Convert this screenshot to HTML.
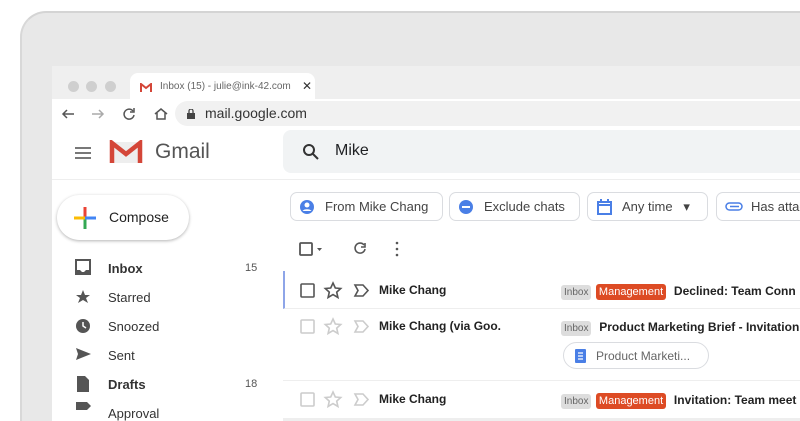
<!DOCTYPE html>
<html style="overflow:hidden;width:800px;height:421px"><head><style>
*{margin:0;padding:0;box-sizing:border-box}
body{width:800px;height:421px;overflow:hidden;background:#fff;font-family:"Liberation Sans",Arial,sans-serif;position:relative;color:#202124}
.abs{position:absolute}
.bezel{left:20px;top:11px;width:780px;height:410px;background:#e8e8e8;border-top:2px solid #d4d4d4;border-left:2px solid #d8d8d8;border-top-left-radius:26px}
.screen{left:52px;top:66px;width:748px;height:355px;background:#fff;overflow:hidden}
.tabs{left:0;top:0;width:748px;height:33px;background:#efefef}
.dot{width:11px;height:11px;border-radius:50%;background:#cfcfcf;top:15px}
.tab{left:78px;top:7px;width:185px;height:27px;background:#fff;border-radius:8px 8px 0 0;font-size:10px;color:#666;padding:8px 0 0 30px;white-space:nowrap}
.pill{left:123px;top:35px;width:640px;height:25px;background:#f1f1f1;border-radius:13px;font-size:14px;color:#333;padding:4px 0 0 30px}
.search{left:231px;top:64px;width:530px;height:43px;background:#f1f3f4;border-radius:8px 0 0 8px;font-size:16px;padding:12px 0 0 52px}
.sep{left:0;top:113px;width:748px;height:1px;background:#eee}
.compose{left:5px;top:129px;width:132px;height:45px;border-radius:23px;background:#fff;box-shadow:0 1px 3px rgba(0,0,0,.3);font-size:14px;padding:14px 0 0 52px;color:#222}
.nav{left:56px;font-size:13px;color:#333}
.cnt{left:193px;font-size:11px;color:#555}
.chip{top:126px;height:29px;border:1px solid #dadce0;border-radius:7px;font-size:13px;color:#444;padding:6px 0 0 34px;white-space:nowrap;overflow:hidden}
.row{left:231px;width:520px;border-bottom:1px solid #eee}
.name{left:327px;font-size:12px;font-weight:bold;color:#222;white-space:nowrap}
.lbl{font-size:10px;padding:2px 3px;border-radius:3px}
.in{background:#ddd;color:#666}
.mg{background:#dd4b24;color:#fff;font-size:11px}
.subj{font-size:12px;font-weight:bold;color:#222;white-space:nowrap}
</style></head><body>
<div class="abs bezel"></div>
<div class="abs screen">
 <div class="abs tabs"></div>
 <div class="abs dot" style="left:16px"></div><div class="abs dot" style="left:34px"></div><div class="abs dot" style="left:53px"></div>
 <div class="abs tab">Inbox (15) - julie@ink-42.com <span style="position:absolute;left:172px;top:6px;color:#333;font-size:12px">✕</span>
  <svg class="abs" style="left:10px;top:10px" width="12" height="9" viewBox="0 0 12 9"><path d="M1 9V1l5 4 5-4v8" fill="none" stroke="#d44638" stroke-width="2"/></svg></div>
 <svg class="abs" style="left:8px;top:40px" width="110" height="16" viewBox="0 0 110 16" fill="none" stroke="#555" stroke-width="1.5">
  <path d="M14 8H3M7 4L3 8l4 4"/><path d="M32 8h11M39 4l4 4-4 4" stroke="#aaa"/>
  <path d="M73 5a5 5 0 1 0 1 4"/><path d="M74 2v4h-4"/>
  <path d="M95 8l6-5 6 5M97 7v6h8V7"/></svg>
 <div class="abs pill"><svg class="abs" style="left:12px;top:8px" width="8" height="10"><rect x="0" y="4" width="8" height="6" fill="#444"/><path d="M2 4V2a2 2 0 0 1 4 0v2" stroke="#444" fill="none" stroke-width="1.3"/></svg>mail.google.com</div>
 <svg class="abs" style="left:22px;top:80px" width="18" height="14"><path d="M1 2h16M1 7h16M1 12h16" stroke="#666" stroke-width="1.8"/></svg>
 <svg class="abs" style="left:57px;top:74px" width="34" height="24" viewBox="0 0 34 24"><rect x="2" y="2" width="30" height="21" fill="#eee"/><path d="M3 23V3l14 11L31 3v20" fill="none" stroke="#d44638" stroke-width="4.5"/></svg>
 <div class="abs" style="left:103px;top:74px;font-size:21px;color:#555">Gmail</div>
 <div class="abs search">Mike<svg class="abs" style="left:19px;top:13px" width="18" height="18"><circle cx="7" cy="7" r="5" stroke="#333" stroke-width="2" fill="none"/><path d="M11 11l5 5" stroke="#333" stroke-width="2"/></svg></div>
 <div class="abs sep"></div>
 <div class="abs compose">Compose<svg class="abs" style="left:17px;top:12px" width="22" height="22"><path d="M11 0v11" stroke="#ea4335" stroke-width="3"/><path d="M11 11v11" stroke="#34a853" stroke-width="3"/><path d="M0 11h11" stroke="#fbbc04" stroke-width="3"/><path d="M11 11h11" stroke="#4285f4" stroke-width="3"/></svg></div>
 <div class="abs nav" style="top:195px;font-weight:bold">Inbox</div><div class="abs cnt" style="top:196px">15</div>
 <div class="abs nav" style="top:224px">Starred</div>
 <div class="abs nav" style="top:253px">Snoozed</div>
 <div class="abs nav" style="top:282px">Sent</div>
 <div class="abs nav" style="top:311px;font-weight:bold">Drafts</div><div class="abs cnt" style="top:312px">18</div>
 <div class="abs nav" style="top:340px">Approval</div>
 <svg class="abs" style="left:22px;top:193px" width="20" height="160" fill="#555">
  <path d="M2 1h14v14H2z" fill="none" stroke="#555" stroke-width="2"/><path d="M2 11h4l2 2h2l2-2h4v4H2z"/>
  <path d="M9 31l2 5h5l-4 3 2 5-5-3-5 3 2-5-4-3h5z"/>
  <circle cx="9" cy="67" r="7"/><path d="M9 63v4l3 2" stroke="#fff" stroke-width="1.5" fill="none"/>
  <path d="M2 89l15 6-15 6 2-6z"/>
  <path d="M3 117h8l4 4v12H3z"/>
  <path d="M2 143h11l4 4-4 4H2z"/>
 </svg>
 <div class="abs chip" style="left:238px;width:153px">From Mike Chang<svg class="abs" style="left:8px;top:6px" width="16" height="16"><circle cx="8" cy="8" r="7" fill="#4a7fe6"/><circle cx="8" cy="6" r="2.5" fill="#fff"/><path d="M3.5 12a5 3 0 0 1 9 0" fill="#fff"/></svg></div>
 <div class="abs chip" style="left:397px;width:131px">Exclude chats<svg class="abs" style="left:8px;top:6px" width="16" height="16"><circle cx="8" cy="8" r="7" fill="#4a7fe6"/><path d="M4 8h8" stroke="#fff" stroke-width="2"/></svg></div>
 <div class="abs chip" style="left:535px;width:121px">Any time &nbsp;&nbsp;▾<svg class="abs" style="left:9px;top:6px" width="15" height="16"><rect x="1" y="3" width="13" height="12" fill="none" stroke="#4a7fe6" stroke-width="2"/><path d="M1 6h13M4 0v4M11 0v4" stroke="#4a7fe6" stroke-width="2"/></svg></div>
 <div class="abs chip" style="left:664px;width:120px">Has attachment<svg class="abs" style="left:8px;top:9px" width="18" height="10"><rect x="1" y="1" width="16" height="7" rx="3.5" fill="none" stroke="#4a7fe6" stroke-width="1.5"/><path d="M5 4.5h9" stroke="#4a7fe6" stroke-width="1.5"/></svg></div>
 <svg class="abs" style="left:246px;top:174px" width="110" height="18"><rect x="2" y="3" width="12" height="12" rx="1" fill="none" stroke="#555" stroke-width="1.8"/><path d="M19 8h5l-2.5 3z" fill="#555"/><path d="M66 5a5 5 0 1 0 1 4" stroke="#555" stroke-width="1.6" fill="none"/><path d="M67 3v4h-4" stroke="#555" stroke-width="1.6" fill="none"/><circle cx="99" cy="3" r="1.3" fill="#555"/><circle cx="99" cy="9" r="1.3" fill="#555"/><circle cx="99" cy="15" r="1.3" fill="#555"/></svg>
 <div class="abs row" style="top:205px;height:38px;border-left:2px solid #8ea5e8"></div>
 <div class="abs row" style="top:243px;height:72px"></div>
 <div class="abs" style="left:231px;top:315px;width:520px;height:40px;border-bottom:3px solid #eee"></div>
 <svg class="abs" style="left:246px;top:215px" width="80" height="130">
  <g fill="none" stroke="#555" stroke-width="1.6"><rect x="3" y="3" width="13" height="13" rx="1"/><path d="M35 2l2.3 5 5.4.5-4 3.6 1.2 5.4-4.9-2.9-4.9 2.9 1.2-5.4-4-3.6 5.4-.5z"/><path d="M57 4h8l5 5.5-5 5.5h-8l3-5.5z"/></g>
  <g fill="none" stroke="#ccc" stroke-width="1.6" transform="translate(0,36)"><rect x="3" y="3" width="13" height="13" rx="1"/><path d="M35 2l2.3 5 5.4.5-4 3.6 1.2 5.4-4.9-2.9-4.9 2.9 1.2-5.4-4-3.6 5.4-.5z"/><path d="M57 4h8l5 5.5-5 5.5h-8l3-5.5z"/></g>
  <g fill="none" stroke="#ccc" stroke-width="1.6" transform="translate(0,109)"><rect x="3" y="3" width="13" height="13" rx="1"/><path d="M35 2l2.3 5 5.4.5-4 3.6 1.2 5.4-4.9-2.9-4.9 2.9 1.2-5.4-4-3.6 5.4-.5z"/><path d="M57 4h8l5 5.5-5 5.5h-8l3-5.5z"/></g>
 </svg>
 <div class="abs name" style="top:217px">Mike Chang</div>
 <div class="abs name" style="top:253px">Mike Chang (via Goo.</div>
 <div class="abs name" style="top:326px">Mike Chang</div>
 <div class="abs" style="left:509px;top:216px;white-space:nowrap"><span class="lbl in">Inbox</span> <span class="lbl mg">Management</span> <span class="subj">&nbsp;Declined: Team Conn</span></div>
 <div class="abs" style="left:509px;top:252px;white-space:nowrap"><span class="lbl in">Inbox</span> <span class="subj">&nbsp;Product Marketing Brief - Invitation</span></div>
 <div class="abs" style="left:509px;top:325px;white-space:nowrap"><span class="lbl in">Inbox</span> <span class="lbl mg">Management</span> <span class="subj">&nbsp;Invitation: Team meet</span></div>
 <div class="abs" style="left:511px;top:276px;width:146px;height:27px;border:1px solid #dadce0;border-radius:14px;font-size:12px;color:#666;padding:6px 0 0 32px;white-space:nowrap">Product Marketi...<svg class="abs" style="left:11px;top:6px" width="11" height="14"><rect width="11" height="14" rx="1" fill="#4a7fe6"/><path d="M3 4h5M3 7h5M3 10h5" stroke="#fff" stroke-width="1.2"/></svg></div>
</div>
</body></html>
